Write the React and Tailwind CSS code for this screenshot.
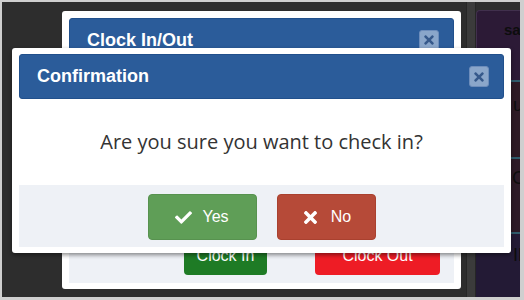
import React from 'react';
import { FaCheck, FaTimes } from 'react-icons/fa';

function CloseButton() {
	return (
		<div className="flex h-[21px] w-[20px] items-center justify-center rounded-[3px] border border-[#6d8dbb] bg-[#8aa6ca]">
			<FaTimes className="text-[#36598b]" size={14} />
		</div>
	);
}

function Header({ title, className }) {
	return (
		<div
			className={`flex items-center justify-between rounded-[3px] border border-[#21508c] bg-[#2b5c9a] text-[18px] font-bold text-white ${className}`}
		>
			<span>{title}</span>
			<CloseButton />
		</div>
	);
}

function SidePanel() {
	return (
		<div className="flex w-[44px] flex-col pt-[8px] text-[#0d0d0d]">
			<div className="h-[70px] rounded-tl-[4px] border-l border-t border-[#41304d] bg-[#2c1a36] pl-[27px] pt-[8px] text-[15px] font-bold">
				save
			</div>
			<div className="h-[2px] bg-[#2f5b6b]" />
			<div className="h-[75px] bg-[#2e1a25] pl-[37px] pt-[10px] text-[18px]">ua</div>
			<div className="h-[2px] bg-[#2f5b6b]" />
			<div className="h-[73px] bg-[#2d1a27] pl-[36px] pt-[6px] text-[18px]">CO</div>
			<div className="h-[2px] bg-[#2f5b6b]" />
			<div className="flex-1 bg-[#231a35] pl-[37px] pt-[8px] text-[18px]">IP</div>
		</div>
	);
}

export default function App() {
	return (
		<div className="relative h-[300px] w-[524px] overflow-hidden border-b-[3px] border-l-2 border-r-4 border-t-2 border-[#cfcfcf] bg-[#2d2d2d] font-['Liberation_Sans',Arial,sans-serif]">
			{/* Page behind the dialogs */}
			<div className="flex h-full">
				<div className="flex-1" />
				<div className="w-[10px] border-x border-[#262626] bg-[#3b3b3b]" />
				<SidePanel />
			</div>

			{/* Clock In/Out dialog */}
			<div className="absolute left-[60px] top-[9px] flex h-[278px] w-[399px] flex-col rounded-[3px] bg-white p-[7px] pb-[6px]">
				<Header title="Clock In/Out" className="h-[44px] pl-[17px] pr-[14px]" />
				<div className="flex-1" />
				<div className="flex h-[56px] items-end gap-[48px] bg-[#eef1f6] pb-[8px] pl-[115px] text-[16px] text-white">
					<div className="flex h-[39px] w-[83px] items-center justify-center rounded-[4px] bg-[#1e7b25]">Clock In</div>
					<div className="flex h-[39px] w-[125px] items-center justify-center rounded-[4px] bg-[#ee1c25]">Clock Out</div>
				</div>
			</div>

			{/* Confirmation dialog */}
			<div className="absolute left-[10px] top-[46px] flex h-[205px] w-[499px] flex-col rounded-[3px] bg-white px-[7px] pb-[6px] pt-[6px] shadow-[0_2px_4px_rgba(0,0,0,0.45)]">
				<Header title="Confirmation" className="h-[45px] pl-[17px] pr-[14px]" />
				<div className="flex h-[86px] items-center justify-center font-['Open_Sans',sans-serif] text-[20px] text-[#333333]">
					Are you sure you want to check in?
				</div>
				<div className="flex flex-1 items-start justify-center gap-[20px] bg-[#eef1f6] pt-[9px] text-[16px] text-white">
					<div className="flex h-[46px] w-[109px] items-center justify-center gap-[10px] rounded-[4px] border border-[#57924f] bg-[#5f9e57]">
						<FaCheck size={17} />
						<span>Yes</span>
					</div>
					<div className="flex h-[46px] w-[99px] items-center justify-center gap-[11px] rounded-[4px] border border-[#a9412f] bg-[#b64a38]">
						<FaTimes size={19} />
						<span>No</span>
					</div>
				</div>
			</div>
		</div>
	);
}
